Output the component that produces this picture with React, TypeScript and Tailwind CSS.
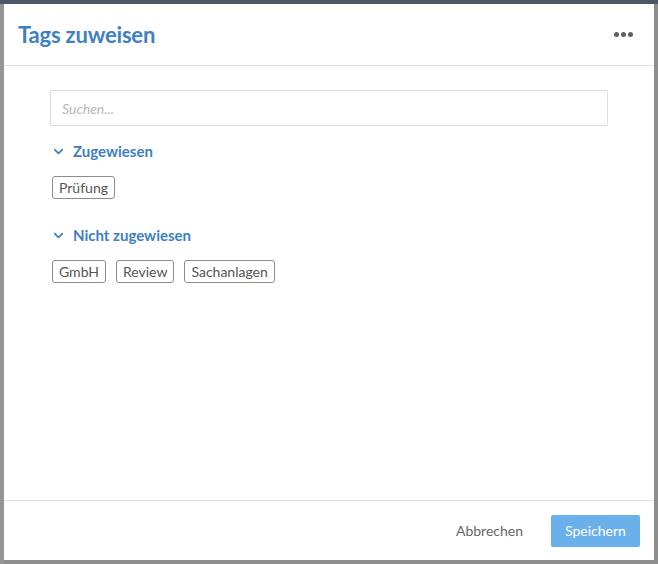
import React from 'react';
import { ChevronDown } from 'lucide-react';

const assigned = ['Prüfung'];
const unassigned = ['GmbH', 'Review', 'Sachanlagen'];

function Tag({ label }: { label: string }) {
  return (
    <span className="inline-flex h-[23px] items-center rounded-[3px] border border-[#8c8c8c] px-[6px] text-[14px] leading-none text-[#555]">
      {label}
    </span>
  );
}

function Section({ title, tags }: { title: string; tags: string[] }) {
  return (
    <div>
      <div className="flex h-[20px] items-center gap-[7px] pl-[1px] text-[#3d80c2]">
        <ChevronDown size={15} strokeWidth={2.75} />
        <span className="text-[15px] font-bold">{title}</span>
      </div>
      <div className="mt-[15px] flex gap-[10px] pl-[2px]">
        {tags.map((t) => (
          <Tag key={t} label={t} />
        ))}
      </div>
    </div>
  );
}

export default function App() {
  return (
    <div
      className="relative h-[564px] w-[658px] overflow-hidden bg-[#8e8e8e]"
      style={{ fontFamily: 'Lato, "Noto Sans", sans-serif' }}
    >
      <div className="h-[4px] bg-[#4a5869]" />
      <div className="flex h-[560px]">
        <div className="w-[4px] bg-[#959595]" />
        <div className="flex-1" />
      </div>

      {/* Dialog */}
      <div className="absolute left-[4px] top-[4px] flex h-[556px] w-[650px] flex-col bg-white">
        <div className="flex h-[62px] items-center justify-between border-b border-[#e0e0e0] pl-[14px] pr-[21px]">
          <h2 className="text-[22px] font-bold tracking-[-0.2px] text-[#3f80c0]">Tags zuweisen</h2>
          <div className="flex gap-[2px]">
            <span className="h-[5px] w-[5px] rounded-full bg-[#606060]" />
            <span className="h-[5px] w-[5px] rounded-full bg-[#606060]" />
            <span className="h-[5px] w-[5px] rounded-full bg-[#606060]" />
          </div>
        </div>

        <div className="flex-1 px-[46px] pt-[24px]">
          <input
            placeholder="Suchen..."
            className="h-[36px] w-full rounded-[2px] border border-[#dcdcdc] px-[11px] text-[14px] italic text-[#444] outline-none placeholder:text-[#b8b8b8]"
          />
          <div className="mt-[15px] flex flex-col gap-[26px]">
            <Section title="Zugewiesen" tags={assigned} />
            <Section title="Nicht zugewiesen" tags={unassigned} />
          </div>
        </div>

        <div className="flex h-[60px] items-center justify-end gap-[28px] border-t border-[#e0e0e0] pr-[14px]">
          <button className="text-[14px] text-[#666]">Abbrechen</button>
          <button className="h-[32px] w-[89px] rounded-[2px] bg-[#6ab0eb] text-[14px] text-white">
            Speichern
          </button>
        </div>
      </div>
    </div>
  );
}
